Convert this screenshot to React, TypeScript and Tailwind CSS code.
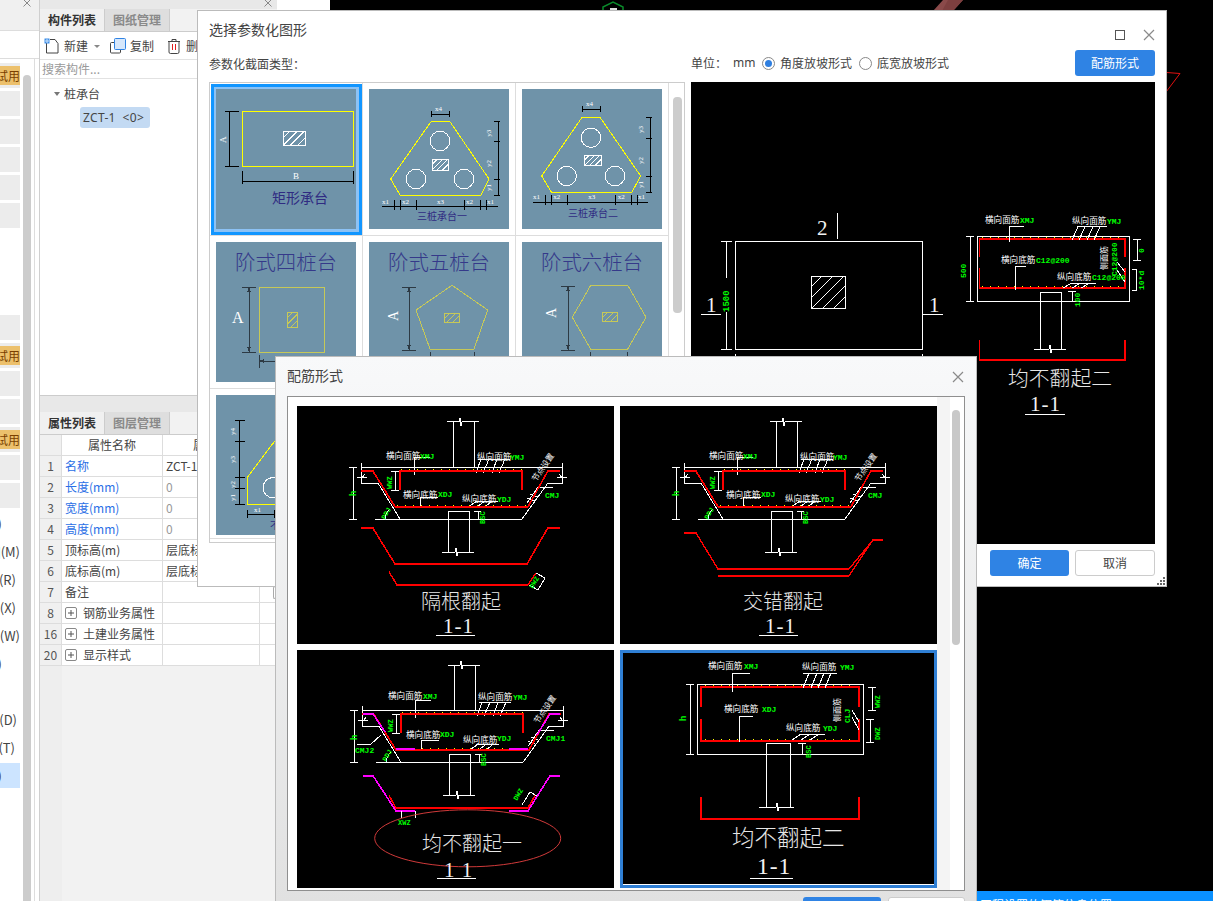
import React from "react";

const CJK = "'Noto Sans CJK SC','Noto Sans',sans-serif";
const SERIF = "'Liberation Serif',serif";
const MONO = "'Liberation Mono',monospace";
const W = "#ffffff";
const R = "#ff0000";
const G = "#00ff00";
const M = "#ff00ff";
const Y = "#ffff00";
const K = "#000000";

function P({ d, c = W, w = 1 }: { d: string; c?: string; w?: number }) {
  return <path d={d} fill="none" stroke={c} strokeWidth={w} />;
}

function T({ x, y, s = 8.6, c = W, r, f = CJK, children, sp, wt }: { x: number; y: number; s?: number; c?: string; r?: number; f?: string; children: React.ReactNode; sp?: number; wt?: number }) {
  return (
    <text x={x} y={y} fontSize={s} fill={c} fontFamily={f} fontWeight={wt} letterSpacing={sp} transform={r !== undefined ? `rotate(${r} ${x} ${y})` : undefined}>
      {children}
    </text>
  );
}

/* green CAD annotation */
function N({ x, y, s = 8, r, children }: { x: number; y: number; s?: number; r?: number; children: React.ReactNode }) {
  return <T x={x} y={y} s={s} c={G} r={r} f={MONO} wt={700}>{children}</T>;
}

function Hatch({ x, y, w, h, c = W, n = 5 }: { x: number; y: number; w: number; h: number; c?: string; n?: number }) {
  const step = (w + h) / n;
  let d = "";
  for (let i = 1; i < n; i++) {
    const a = step * i;
    d += `M${a - h} ${h}L${a} 0 `;
  }
  return (
    <g>
      <svg x={x} y={y} width={w} height={h}>
        <path d={d} stroke={c} fill="none" strokeWidth={1} />
      </svg>
      <rect x={x} y={y} width={w} height={h} fill="none" stroke={c} strokeWidth={1} />
    </g>
  );
}

function Brk({ x, y }: { x: number; y: number }) {
  return <path d={`M${x - 3} ${y}H${x}L${x + 1} ${y - 4}L${x + 2} ${y + 4}L${x + 3} ${y}H${x + 6}`} fill="none" stroke={W} strokeWidth={1} />;
}

/* ------------ bar-layout drawings for the reinforcement gallery ------------ */

function TrapBody() {
  return (
    <g>
      <P d="M150 15.7H160M166 15.7H182M156.3 15.7V61M177 15.7V61" />
      <Brk x={162} y={15.7} />
      <P d="M64 61.3H265M64 57V77H81L103 113M78 113H225L251 77H265V57" />
      <P d="M151 105V146M172 105V146M151 105H172M145 146H156M162 146H177" />
      <Brk x={158} y={146} />
      <P d="M56 61V113M52 61H60M52 113H60" />
      <P d="M60 71H70M68 68L64 73M260 71H270M262 68L266 73" />
      <P d="M88 113A14 14 0 0 1 93 103" />
      <P d="M98 65V84M94 65H102M94 84H102" />
      <P d="M181 105V113M177 105H184" />
      <P d="M256 81H241L230 97M230 92L238 95M233 88L241 91" />
      <P d="M181 53H213M179 67L184 53M186 67L192 53M195 67L200 53M202 67L208 53" />
      <P d="M178 95H201M171 101L180 95M180 101L188 95M188 101L195 95" />
      <P d="M117 51.3H133M117 51.3V69" />
      <P d="M123 91H141M123 91V102" />
      <P d="M103 84V64.7H225V84M64 64.7H75.7L98 100.7H231L251 64.7H263" c={R} w={1.6} />
      <path d="M104 63.4H225M100 99.4H229" stroke={Y} strokeWidth={1} strokeDasharray="1 7" fill="none" />
    </g>
  );
}

function TrapLabels() {
  return (
    <g>
      <T x={89} y={53}>横向面筋</T>
      <N x={123} y={53}>XMJ</N>
      <T x={180} y={54}>纵向面筋</T>
      <N x={213} y={54}>YMJ</N>
      <T x={106} y={92}>横向底筋</T>
      <N x={141} y={91}>XDJ</N>
      <T x={165} y={96}>纵向底筋</T>
      <N x={200} y={96}>YDJ</N>
      <N x={248} y={92}>CMJ</N>
      <N x={95} y={83} r={-90} s={7}>WWZ</N>
      <N x={88} y={114} r={-60} s={7}>PDJ</N>
      <N x={188} y={118} r={-90} s={7}>BSC</N>
      <N x={59} y={90} r={-90} s={9}>h</N>
      <T x={239} y={76} r={-55} s={8}>节点设置</T>
    </g>
  );
}

function Caption({ x, y, title, s = 20, nx, ny, ux1, ux2, uy, one = "1-1" }: { x: number; y: number; title: string; s?: number; nx: number; ny: number; ux1: number; ux2: number; uy: number; one?: string }) {
  return (
    <g>
      <T x={x} y={y} s={s} c="#e6e6e6" wt={300}>{title}</T>
      <T x={nx} y={ny} s={s + 1} c="#f2f2f2" f={SERIF} sp={1}>{one}</T>
      <P d={`M${ux1} ${uy}H${ux2}`} />
    </g>
  );
}

function Bar1() {
  return (
    <svg width="317" height="238" viewBox="0 0 317 238" shapeRendering="crispEdges" className="block bg-black">
      <TrapBody />
      <TrapLabels />
      <P d="M64 121.7H75.7L98 158H230L251 121.7H263" c={R} w={1.6} />
      <P d="M92 165.7L100 179H231L239 167" c={R} w={1.4} />
      <P d="M239 167L248 172L241 184L232 179" />
      <N x={236} y={183} r={-60} s={7}>DWZ</N>
      <Caption x={124} y={203} title="隔根翻起" nx={146} ny={227} ux1={139} ux2={178} uy={229} />
    </svg>
  );
}

function Bar2() {
  return (
    <svg width="317" height="238" viewBox="0 0 317 238" shapeRendering="crispEdges" className="block bg-black">
      <TrapBody />
      <TrapLabels />
      <P d="M64 127H76L98 163H229L253 134H263" c={R} w={1.4} />
      <P d="M98 170H229L253 134" c={R} w={1.4} />
      <Caption x={123} y={203} title="交错翻起" nx={145} ny={227} ux1={139} ux2={178} uy={229} />
    </svg>
  );
}

function Bar3() {
  return (
    <svg width="317" height="238" viewBox="0 0 317 238" shapeRendering="crispEdges" className="block bg-black">
      <g transform="translate(1 -0.7)">
        <TrapBody />
      </g>
      <P d="M66 63.7H76L88 82M99 99H118M212 99H231M240 85L253 63.7H263" c={M} w={1.6} />
      <P d="M66 125.7H76L99 161H118M212 161H231L253 125.7H263" c={M} w={1.6} />
      <P d="M92 145.7L99 158H231L238 145.7" c={R} w={1.6} />
      <P d="M60 94H74L84 85M104 161V168M118 161V168" />
      <P d="M225 155L233 142L240 146" />
      <T x={91} y={49}>横向面筋</T>
      <N x={126} y={49}>XMJ</N>
      <T x={181} y={50}>纵向面筋</T>
      <N x={216} y={50}>YMJ</N>
      <T x={109} y={88}>横向底筋</T>
      <N x={143} y={87}>XDJ</N>
      <T x={166} y={93}>纵向底筋</T>
      <N x={200} y={91}>YDJ</N>
      <N x={249} y={91}>CMJ1</N>
      <N x={58} y={103}>CMJ2</N>
      <N x={96} y={82} r={-90} s={7}>WWZ</N>
      <N x={89} y={112} r={-60} s={7}>PDJ</N>
      <N x={189} y={116} r={-90} s={7}>BSC</N>
      <N x={60} y={90} r={-90} s={9}>h</N>
      <N x={220} y={151} r={-60} s={7}>DWZ</N>
      <N x={101} y={175} s={7}>XWZ</N>
      <T x={241} y={74} r={-55} s={8}>节点设置</T>
      <g style={{ shapeRendering: "auto" }}>
        <ellipse cx={170.7} cy={188.3} rx={93} ry={28.5} fill="none" stroke="#d03a3a" strokeWidth={1} />
      </g>
      <Caption x={125} y={201} title="均不翻起一" nx={147} ny={227} ux1={140} ux2={179} uy={228} one="1 1" />
    </svg>
  );
}

function Bar4() {
  return (
    <svg width="311" height="231" viewBox="3 3 311 231" shapeRendering="crispEdges" className="block bg-black">
      <rect x={77.3} y={34} width={166.4} height={70} fill="none" stroke={W} />
      <P d="M81 57V36.7H239V57M81 69V90.7H239V69" c={R} w={1.6} />
      <path d="M85 35.4H236M85 89.4H236" stroke={Y} strokeWidth={1} strokeDasharray="1 7" fill="none" />
      <P d="M146 93V157M170 93V157M146 93H170M139 157H154M160 157H174" />
      <Brk x={156} y={157} />
      <P d="M81 147V169H239V147" c={R} w={1.6} />
      <P d="M70 34V104M66 34H74M66 104H74" />
      <P d="M112 23H130M112 23V42" />
      <P d="M119 66H133M119 66V92" />
      <P d="M183 23H217M183 38L189 23M191 38L197 23M198 38L204 23M205 38L211 23" />
      <P d="M180 84H205M172 90L181 84M181 90L190 84M190 90L199 84" />
      <P d="M252 37V60M248 37H256M248 60H256M250 69V92M246 69H254M246 92H254" />
      <P d="M182 93V104M178 93H186" />
      <P d="M232 60L239 72M232 67L239 80" />
      <T x={88} y={19}>横向面筋</T>
      <N x={124} y={19}>XMJ</N>
      <T x={182} y={20}>纵向面筋</T>
      <N x={220} y={20}>YMJ</N>
      <T x={104} y={62}>横向底筋</T>
      <N x={142} y={62}>XDJ</N>
      <T x={166} y={81}>纵向底筋</T>
      <N x={203} y={81}>YDJ</N>
      <T x={220} y={72} r={-90} s={8}>侧面筋</T>
      <N x={230} y={73} r={-90}>CLJ</N>
      <N x={260} y={58} r={-90} s={7}>WWZ</N>
      <N x={260} y={90} r={-90} s={7}>DWZ</N>
      <N x={191} y={108} r={-90} s={7}>BSC</N>
      <N x={66} y={71} r={-90} s={9}>h</N>
      <Caption x={112} y={196} title="均不翻起二" s={22.5} nx={137} ny={224} ux1={130} ux2={173} uy={228} />
    </svg>
  );
}

/* ------------ parametric thumbnails ------------ */

function Thumb({ children }: { children: React.ReactNode }) {
  return (
    <svg width="140" height="140" viewBox="0 0 140 140" shapeRendering="crispEdges" className="block bg-[#6f93a9]">
      {children}
    </svg>
  );
}

const NAVY = "#2f2b82";
const DIM = "#2d3a44";
const OLIVE = "#c6c858";

function Rect1() {
  return (
    <Thumb>
      <rect x={26} y={22} width={111} height={55} fill="none" stroke={Y} />
      <P d="M13 22V77M9 22H23M9 77H23M26 92H137M26 82V95M137 82V95" c={K} />
      <Hatch x={67} y={42} w={22} h={14} />
      <T x={10} y={54} r={-90} s={9} f={SERIF}>A</T>
      <T x={77} y={90} s={9} f={SERIF}>B</T>
      <T x={56} y={114} s={14} c={NAVY}>矩形承台</T>
    </Thumb>
  );
}

function Tri({ top, poly, circles, hatch, right, bottom, by, rx, title, ty, tx, topy }: { top: [number, number]; poly: string; circles: [number, number][]; hatch: [number, number, number, number]; right: number[]; bottom: number[]; by: number; rx: number; title: string; ty: number; tx: number; topy: number }) {
  return (
    <Thumb>
      <path d={poly} fill="none" stroke={Y} />
      {circles.map(([cx, cy], i) => (
        <circle key={i} cx={cx} cy={cy} r={9.7} fill="none" stroke={W} />
      ))}
      <Hatch x={hatch[0]} y={hatch[1]} w={hatch[2]} h={hatch[3]} />
      <P d={`M${top[0]} ${topy}H${top[1]}M${top[0]} ${topy - 3}V${topy + 3}M${top[1]} ${topy - 3}V${topy + 3}`} c={K} />
      <T x={top[0] + 4} y={topy - 3} s={7} f={SERIF}>x4</T>
      <P d={`M${rx} ${right[0]}V${right[right.length - 1]}` + right.map((y) => `M${rx - 4} ${y}H${rx + 2}`).join("")} c={K} />
      <T x={rx - 7} y={right[1] - 5} s={7} r={-90} f={SERIF}>y3</T>
      <T x={rx - 7} y={right[2] - 12} s={7} r={-90} f={SERIF}>y2</T>
      <T x={rx - 7} y={right[3] - 4} s={7} r={-90} f={SERIF}>y1</T>
      <P d={`M${bottom[0]} ${by}H${bottom[7]}` + bottom.slice(1, 7).map((x) => `M${x} ${by - 7}V${by + 3}`).join("")} c={K} />
      <T x={bottom[0]} y={by - 3} s={7} f={SERIF}>x1</T>
      <T x={bottom[2] + 2} y={by - 3} s={7} f={SERIF}>x2</T>
      <T x={(bottom[3] + bottom[4]) / 2 - 3} y={by - 3} s={7} f={SERIF}>x3</T>
      <T x={bottom[4] + 2} y={by - 3} s={7} f={SERIF}>x2</T>
      <T x={bottom[6] + 1} y={by - 3} s={7} f={SERIF}>x1</T>
      <T x={tx} y={ty} s={10} c={NAVY}>{title}</T>
    </Thumb>
  );
}

function Step({ n, children }: { n: string; children: React.ReactNode }) {
  return (
    <Thumb>
      <T x={19} y={28} s={20.4} c="#35398a" wt={300}>{n}</T>
      {children}
    </Thumb>
  );
}

function Arrow({ x, y1, y2 }: { x: number; y1: number; y2: number }) {
  return (
    <g>
      <P d={`M${x} ${y1}V${y2}M${x - 7} ${y1}H${x + 7}M${x - 7} ${y2}H${x + 7}`} c={DIM} />
      <path d={`M${x} ${y1}l-2 5h4zM${x} ${y2}l-2 -5h4z`} fill={DIM} />
    </g>
  );
}

function Thumb4() {
  return (
    <Step n="阶式四桩台">
      <rect x={43} y={45} width={65} height={65} fill="none" stroke={OLIVE} />
      <Hatch x={71} y={70} w={10} h={15} c={OLIVE} n={4} />
      <Arrow x={33} y1={45} y2={110} />
      <T x={16} y={81} s={16} f={SERIF}>A</T>
      <P d="M43 113V126M43 119H60" c={DIM} />
      <path d="M43 119l5 -2v4z" fill={DIM} />
    </Step>
  );
}

function Thumb5() {
  return (
    <Step n="阶式五桩台">
      <path d="M83 43.3L118.7 68L105 107H61L47 68Z" fill="none" stroke={OLIVE} />
      <Hatch x={75} y={71} w={15} h={9} c={OLIVE} n={4} />
      <Arrow x={40} y1={45} y2={108} />
      <T x={29} y={79} s={14} r={-90} f={SERIF}>A</T>
      <P d="M61 110V116M105 110V116" c={DIM} />
    </Step>
  );
}

function Thumb6() {
  return (
    <Step n="阶式六桩台">
      <path d="M68.7 43.3H105.7L124 75.3L105.7 107H68.7L50.3 75.3Z" fill="none" stroke={OLIVE} />
      <Hatch x={80} y={70} w={15} h={9} c={OLIVE} n={4} />
      <Arrow x={46} y1={44} y2={108} />
      <T x={34} y={76} s={14} r={-90} f={SERIF}>A</T>
      <P d="M68.7 110V116M105.7 110V116" c={DIM} />
    </Step>
  );
}

function Thumb7() {
  return (
    <Thumb>
      <path d="M80 18L31 82.7V109H130" fill="none" stroke={Y} />
      <circle cx={57} cy={92.7} r={10} fill="none" stroke={W} />
      <P d="M23 25V109M19 25H29M19 46H29M19 82.7H29M19 93.3H29M19 109H29" c={K} />
      <P d="M31 115V123M58 115V123M31 119H58" c={K} />
      <T x={38} y={117} s={7} f={SERIF}>x1</T>
      <T x={19} y={40} s={7} r={-90} f={SERIF}>y4</T>
      <T x={19} y={68} s={7} r={-90} f={SERIF}>y3</T>
      <T x={19} y={93} s={7} r={-90} f={SERIF}>y2</T>
      <T x={19} y={106} s={7} r={-90} f={SERIF}>y1</T>
      <T x={54} y={134} s={10} c={NAVY}>不规则承台</T>
    </Thumb>
  );
}

function Thumbs() {
  const cell = "w-[153px] border-r border-b border-[#dddddd]";
  return (
    <div className="grid grid-cols-[153px_153px_153px] grid-rows-[153px_153px_150px]">
      <div className={cell}>
        <div className="ml-[1px] mt-[1px] h-[151px] w-[151px] border-[3px] border-[#1296ff] bg-[#8cc2f5] pl-[2px] pt-[2px]">
          <Rect1 />
        </div>
      </div>
      <div className={`${cell} pl-[6px] pt-[6px]`}>
        <Tri top={[62, 80]} topy={25} poly="M62 32.7H81L120 90L112 106H31L21.7 90Z" circles={[[71, 52], [47, 90], [95, 90]]} hatch={[63, 70, 16, 11]} right={[32.7, 52.7, 90, 106]} rx={129} bottom={[13, 25, 31, 47, 95, 111, 117, 129]} by={117.7} tx={48} ty={131} title="三桩承台一" />
      </div>
      <div className={`${cell} pl-[6px] pt-[6px]`}>
        <Tri top={[60, 78]} topy={20} poly="M60 28.3H78L118.7 87L110 103H29.3L19.7 87Z" circles={[[69, 48.7], [44.7, 87], [93, 87]]} hatch={[62, 66, 17, 10]} right={[28.3, 49, 87, 103]} rx={128} bottom={[11, 23.7, 29.3, 45, 93.7, 109, 115, 126]} by={113.3} tx={46} ty={128} title="三桩承台二" />
      </div>
      <div className={`${cell} pl-[6px] pt-[6px]`}><Thumb4 /></div>
      <div className={`${cell} pl-[6px] pt-[6px]`}><Thumb5 /></div>
      <div className={`${cell} pl-[6px] pt-[6px]`}><Thumb6 /></div>
      <div className={`${cell} pl-[6px] pt-[6px]`}><Thumb7 /></div>
      <div className={cell} />
      <div className={cell} />
    </div>
  );
}

/* ------------ preview of the selected shape ------------ */

function Preview() {
  return (
    <svg width="464" height="462" viewBox="0 0 464 462" shapeRendering="crispEdges" className="block bg-black">
      <T x={126} y={153} s={21} f={SERIF} c="#f2f2f2">2</T>
      <P d="M146 131V157" />
      <rect x={44} y={159.5} width={187} height={108} fill="none" stroke={W} />
      <Hatch x={120} y={194} w={34} h={32} n={6} />
      <P d="M35 159.5V196M35 230V267.5M30 159.5H41M30 267.5H41M44 272V274M231 272V274" />
      <N x={38} y={230} r={-90} s={9}>1500</N>
      <T x={15} y={230} s={21} f={SERIF} c="#f2f2f2">1</T>
      <P d="M10 232H30M231 232H252" />
      <T x={238} y={230} s={21} f={SERIF} c="#f2f2f2">1</T>

      <rect x={286} y={154.5} width={152} height={64.5} fill="none" stroke={W} />
      <P d="M288.5 175V157H434V175M288.5 186V206H434V186" c={R} w={1.6} />
      <path d="M291 155.6H432M291 204.6H432" stroke={Y} strokeWidth={1} strokeDasharray="1 7" fill="none" />
      <P d="M349 210V267M370 210V267M349 210H370M343 267H356M362 267H375" />
      <Brk x={358} y={267} />
      <P d="M288.5 258V278H434V258" c={R} w={1.6} />
      <P d="M279 154.5V219M275 154.5H283M275 219H283" />
      <P d="M318 144H333M318 144V160" />
      <P d="M324 184H335M324 184V208" />
      <P d="M387 144.5H416M381 158L387 144.5M388 158L394 144.5M396 158L402 144.5M403 158L409 144.5" />
      <P d="M380 201H405M372 206L381 201M381 206L390 201M390 206L399 201" />
      <P d="M446 157V178M442 157H450M442 178H450" />
      <P d="M441 187H445V208H441" />
      <P d="M381 209V219M377 209H385" />
      <P d="M426 180L434 190M426 188L434 200" />
      <T x={294} y={141}>横向面筋</T>
      <N x={329} y={141}>XMJ</N>
      <T x={381} y={142}>纵向面筋</T>
      <N x={416} y={142}>YMJ</N>
      <T x={310} y={181}>横向底筋</T>
      <N x={345} y={181}>C12@200</N>
      <T x={366} y={198}>纵向底筋</T>
      <N x={401} y={198}>C12@200</N>
      <T x={416} y={188} r={-90} s={8}>侧面筋</T>
      <N x={426} y={194} r={-90}>C12@200</N>
      <N x={275} y={196} r={-90} s={8}>500</N>
      <N x={453} y={171} r={-90} s={8}>0</N>
      <N x={453} y={208} r={-90} s={8}>10*d</N>
      <N x={389} y={225} r={-90} s={8}>100</N>

      <T x={317} y={304} s={20.8} c="#e6e6e6" wt={300}>均不翻起二</T>
      <T x={339} y={329} s={21} f={SERIF} c="#f2f2f2" sp={1}>1-1</T>
      <P d="M334 332H374" />
    </svg>
  );
}

/* ------------ left-hand panels ------------ */

const stripRows: { k: string }[] = [
  { k: "orange" }, { k: "gray" }, { k: "gray" }, { k: "gray" }, { k: "gray" }, { k: "gray" },
  { k: "blank" }, { k: "blank" }, { k: "blank" },
  { k: "gray" }, { k: "orange" }, { k: "gray" }, { k: "gray" }, { k: "orange" }, { k: "gray" }, { k: "gray" },
];

function SmallX() {
  return (
    <svg width="8" height="8" viewBox="0 0 8 8" className="block">
      <path d="M0.5 0.5L7.5 7.5M7.5 0.5L0.5 7.5" stroke="#888888" fill="none" />
    </svg>
  );
}

function Strip() {
  return (
    <div className="flex h-full w-[40px] shrink-0 flex-col border-r border-[#cfcfcf] bg-white">
      <div className="flex h-[31px] items-start border-b border-[#dddddd] bg-[#f0f0f0] pl-[23px]">
        <div className="-mt-[1px]"><SmallX /></div>
      </div>
      <div className="h-[28px] border-b border-[#dddddd]" />
      <div className="flex min-h-0 flex-1">
        <div className="flex w-[20px] flex-col gap-[3px] pt-[4px]">
          {stripRows.map((r, i) =>
            r.k === "orange" ? (
              <div key={i} className="flex h-[25px] items-center bg-[#ececec]">
                <div className="flex h-[19px] w-full items-center justify-end overflow-hidden bg-[#ecc06c] text-[12px] leading-none text-[#7a3f00]">
                  <span className="whitespace-nowrap">免费试用</span>
                </div>
              </div>
            ) : r.k === "gray" ? (
              <div key={i} className="h-[25px] bg-[#ececec]" />
            ) : (
              <div key={i} className="h-[25px]" />
            ),
          )}
          <StripText t="框)" pr="pr-[18px]" />
          <StripText t="图(M)" pr="pr-0" />
          <StripText t="板(R)" pr="pr-[4px]" />
          <StripText t="梁(X)" pr="pr-[4px]" />
          <StripText t="墙(W)" pr="pr-0" />
          <StripText t="柱)" pr="pr-[18px]" />
          <div className="h-[25px]" />
          <StripText t="础(D)" pr="pr-[3px]" />
          <StripText t="台(T)" pr="pr-[5px]" />
          <StripText t="台)" pr="pr-[18px]" cls="bg-[#cce4ff]" />
        </div>
        <div className="ml-[3px] mt-[16px] w-[8px] rounded-t-[4px] bg-[#cccccc]" />
        <div className="ml-[3px] w-[1px] bg-[#dddddd]" />
      </div>
    </div>
  );
}

function StripText({ t, pr, cls = "" }: { t: string; pr: string; cls?: string }) {
  return (
    <div className={`flex h-[25px] items-center justify-end overflow-hidden text-[13px] text-[#444444] ${pr} ${cls}`}>
      <span className="whitespace-nowrap">{t}</span>
    </div>
  );
}

function Tabs({ a, b }: { a: string; b: string }) {
  return (
    <div className="flex h-[23px] border-b border-[#cccccc] bg-[#f2f2f2]">
      <div className="flex w-[65px] items-center justify-center border-r border-[#cccccc] bg-[#f0f0f0] text-[12px] font-bold text-[#333333]">{a}</div>
      <div className="flex w-[65px] items-center justify-center border-r border-[#cccccc] bg-[#dedede] text-[12px] font-bold text-[#8a8a8a]">{b}</div>
    </div>
  );
}

const propRows: { n: string; name: string; val?: string; blue?: boolean; gray?: boolean; plus?: boolean }[] = [
  { n: "1", name: "名称", val: "ZCT-1", blue: true },
  { n: "2", name: "长度(mm)", val: "0", blue: true, gray: true },
  { n: "3", name: "宽度(mm)", val: "0", blue: true, gray: true },
  { n: "4", name: "高度(mm)", val: "0", blue: true, gray: true },
  { n: "5", name: "顶标高(m)", val: "层底标高" },
  { n: "6", name: "底标高(m)", val: "层底标高" },
  { n: "7", name: "备注" },
  { n: "8", name: "钢筋业务属性", plus: true },
  { n: "16", name: "土建业务属性", plus: true },
  { n: "20", name: "显示样式", plus: true },
];

function PropTable() {
  return (
    <div className="flex min-h-0 flex-1 flex-col bg-[#f0f0f0]">
      <div className="flex h-[21px] border-b border-[#dddddd] bg-white text-[12px] text-[#444444]">
        <div className="w-[22px] border-r border-[#dddddd] bg-[#f0f0f0]" />
        <div className="flex w-[101px] items-center justify-center border-r border-[#dddddd]">属性名称</div>
        <div className="flex w-[97px] items-center justify-center overflow-hidden border-r border-[#dddddd]">属性值</div>
        <div className="flex-1" />
      </div>
      {propRows.map((r) => (
        <div key={r.n} className="flex h-[21px] border-b border-[#dddddd] bg-white text-[12px] text-[#444444]">
          <div className="flex w-[22px] items-center justify-center border-r border-[#dddddd] bg-[#f0f0f0] text-[12px] text-[#555555]">{r.n}</div>
          <div className={`flex w-[101px] items-center gap-[6px] whitespace-nowrap border-r border-[#dddddd] pl-[3px] ${r.blue ? "text-[#2b6fe6]" : ""}`}>
            {r.plus && (
              <span className="flex h-[12px] w-[12px] items-center justify-center rounded-[2px] border border-[#888888]">
                <svg width="8" height="8" viewBox="0 0 8 8"><path d="M4 1V7M1 4H7" stroke="#555" strokeWidth="1" /></svg>
              </span>
            )}
            <span>{r.name}</span>
          </div>
          <div className={`flex w-[97px] items-center overflow-hidden whitespace-nowrap border-r border-[#dddddd] pl-[3px] ${r.gray ? "text-[#999999]" : ""}`}>{r.val}</div>
          <div className="flex flex-1 items-center justify-end">
            {r.n === "7" && <span className="h-[13px] w-[4px] rounded-l-[2px] border border-r-0 border-[#aaaaaa]" />}
          </div>
        </div>
      ))}
      <div className="flex flex-1">
        <div className="w-[22px] bg-[#eeeeee]" />
        <div className="flex-1 bg-[#f2f2f2]" />
      </div>
    </div>
  );
}

function Panel() {
  return (
    <div className="flex h-full w-[237px] shrink-0 flex-col bg-[#e8e8e8]">
      <div className="flex h-[9px] items-start justify-end overflow-hidden pr-[5px]">
        <div className="-mt-[1px]"><SmallX /></div>
      </div>
      <div className="flex h-[387px] flex-col border-b border-[#cccccc] bg-white">
        <Tabs a="构件列表" b="图纸管理" />
        <div className="flex h-[28px] items-center border-b border-[#e2e2e2] pl-[4px] text-[12px] text-[#444444]">
          <svg width="16" height="16" viewBox="0 0 16 16">
            <path d="M2.5 3V15H14V5.5L11 1.5H6" fill="none" stroke="#444" />
            <rect x="0.5" y="0.5" width="5" height="5" fill="#3d8ee8" />
            <path d="M1 3H5M3 1V5" stroke="#cfe4fb" strokeWidth="1" />
          </svg>
          <span className="ml-[4px]">新建</span>
          <span className="ml-[6px] mt-[1px] h-0 w-0 border-x-[3px] border-t-[3px] border-x-transparent border-t-[#888888]" />
          <svg className="ml-[10px]" width="16" height="16" viewBox="0 0 16 16">
            <rect x="0.5" y="4.5" width="10" height="10.5" rx="1" fill="#fff" stroke="#444" />
            <rect x="4.5" y="0.5" width="11" height="11" rx="1" fill="#d6e7fb" stroke="#2f83e4" />
          </svg>
          <span className="ml-[4px]">复制</span>
          <svg className="ml-[13px]" width="14" height="16" viewBox="0 0 14 16">
            <path d="M1 3.5H13M5 3.5V1.5H9V3.5M2 3.5V14A1.5 1.5 0 0 0 3.5 15.5H10.5A1.5 1.5 0 0 0 12 14V3.5" fill="none" stroke="#444" />
            <path d="M5.5 6V12M8.5 6V12" stroke="#e02020" strokeWidth="1" />
          </svg>
          <span className="ml-[5px] whitespace-nowrap">删除</span>
        </div>
        <div className="flex h-[19px] items-center border-b border-[#e2e2e2] pl-[2px] text-[12px] text-[#9a9a9a]">搜索构件...</div>
        <div className="pl-[14px] pt-[5px] text-[12px] text-[#444444]">
          <div className="flex h-[20px] items-center gap-[4px]">
            <span className="h-0 w-0 border-x-[3px] border-t-[4px] border-x-transparent border-t-[#777777]" />
            <span>桩承台</span>
          </div>
          <div className="ml-[26px] mt-[3px] flex h-[21px] w-[70px] items-center whitespace-pre rounded-[3px] bg-[#c3daf3] pl-[3px] font-['Noto_Sans',sans-serif] tracking-[0.3px]">{"ZCT-1  <0>"}</div>
        </div>
      </div>
      <div className="h-[16px]" />
      <Tabs a="属性列表" b="图层管理" />
      <PropTable />
    </div>
  );
}

/* ------------ windows ------------ */

function Radio({ on }: { on?: boolean }) {
  return (
    <span className="flex h-[13px] w-[13px] shrink-0 items-center justify-center rounded-full border border-[#888888] bg-white">
      {on && <span className="h-[7px] w-[7px] rounded-full bg-[#2f7fe0]" />}
    </span>
  );
}

function XIcon() {
  return (
    <svg width="12" height="12" viewBox="0 0 12 12">
      <path d="M1 1L11 11M11 1L1 11" stroke="#8a8a8a" strokeWidth="1.2" fill="none" />
    </svg>
  );
}

function Btn({ w, blue, children }: { w: string; blue?: boolean; children: React.ReactNode }) {
  return (
    <div className={`flex h-[26px] ${w} shrink-0 items-center justify-center rounded-[3px] text-[12px] ${blue ? "bg-[#2f83e4] text-white" : "border border-[#cccccc] bg-white text-[#444444]"}`}>
      {children}
    </div>
  );
}

function ShapeDialog() {
  return (
    <div className="absolute left-[197px] top-[10px] flex h-[577px] w-[970px] flex-col border border-[#bbbbbb] bg-white text-[#444444]">
      <div className="flex h-[38px] shrink-0 items-center justify-between px-[11px]">
        <span className="-mt-[2px] text-[14px]">选择参数化图形</span>
        <div className="mt-[10px] flex items-center gap-[18px]">
          <span className="h-[10px] w-[10px] border border-[#555555]" />
          <XIcon />
        </div>
      </div>
      <div className="flex shrink-0 gap-[6px] px-[11px]">
        <div className="w-[476px]">
          <div className="flex h-[33px] items-center pb-[3px] text-[12px]">参数化截面类型：</div>
          <div className="flex h-[461px] overflow-hidden border border-[#cccccc]">
            <Thumbs />
            <div className="ml-[4px] mt-[14px] h-[216px] w-[9px] rounded-[4px] bg-[#cccccc]" />
          </div>
        </div>
        <div className="w-[464px]">
          <div className="flex h-[33px] items-start text-[12px]">
            <div className="flex h-[27px] flex-1 items-center pt-[1px]">
              <span className="w-[42px]">单位：</span>
              <span className="w-[29px] font-['Noto_Sans',sans-serif]">mm</span>
              <Radio on />
              <span className="ml-[5px]">角度放坡形式</span>
              <span className="ml-[7px]"><Radio /></span>
              <span className="ml-[5px]">底宽放坡形式</span>
            </div>
            <div className="mt-[1px]"><Btn w="w-[80px]" blue>配筋形式</Btn></div>
          </div>
          <Preview />
        </div>
      </div>
      <div className="flex justify-end gap-[6px] px-[11px] pt-[6px]">
        <Btn w="w-[79px]" blue>确定</Btn>
        <Btn w="w-[80px]">取消</Btn>
      </div>
      <svg className="absolute bottom-[1px] right-[1px]" width="9" height="9" viewBox="0 0 9 9">
        <path d="M7 1h2v2H7zM4 4h2v2H4zM7 4h2v2H7zM1 7h2v2H1zM4 7h2v2H4zM7 7h2v2H7z" fill="#666" />
      </svg>
    </div>
  );
}

function BarDialog() {
  return (
    <div className="absolute left-[275px] top-[356px] flex h-[570px] w-[702px] flex-col border border-[#bbbbbb] bg-gradient-to-b from-[#f8f9fa] to-[#e0e0e0] text-[#444444]">
      <div className="flex h-[39px] shrink-0 items-center justify-between pl-[11px] pr-[12px]">
        <span className="-mt-[2px] text-[14px]">配筋形式</span>
        <XIcon />
      </div>
      <div className="mx-[11px] flex h-[495px] shrink-0 border border-[#8f8f8f] bg-white">
        <div className="ml-[9px] mt-[9px] grid h-fit w-[640px] grid-cols-[317px_317px] gap-[6px]">
          <Bar1 />
          <Bar2 />
          <Bar3 />
          <div className="border-[3px] border-[#2f7fd5]"><Bar4 /></div>
        </div>
        <div className="w-[13px] bg-[#f4f4f4]" />
        <div className="w-[14px] px-[2px] pt-[13px]">
          <div className="h-[235px] w-[8px] rounded-[4px] bg-[#c8c8c8]" />
        </div>
      </div>
      <div className="flex justify-end gap-[7px] px-[11px] pt-[6px]">
        <Btn w="w-[78px]" blue>确定</Btn>
        <Btn w="w-[77px]">取消</Btn>
      </div>
    </div>
  );
}

export default function App() {
  return (
    <div className="relative flex h-[901px] w-[1213px] overflow-hidden bg-black font-['Noto_Sans_CJK_SC','Noto_Sans',sans-serif]">
      <Strip />
      <Panel />
      <div className="h-full w-[53px] shrink-0 bg-white" />
      <div className="flex h-full flex-1 flex-col justify-end">
        <div className="h-[10px] overflow-hidden bg-[#0a90ff] pl-[650px] pt-[7px] text-[12px] leading-[14px] text-white">
          <span className="whitespace-nowrap">工程设置的钢筋信息位置</span>
        </div>
      </div>
      <svg className="absolute left-[330px] top-0" width="883" height="120" viewBox="330 0 883 120">
        <path d="M603 10V7L613 2L623 7V10" fill="none" stroke="#0a8a2a" strokeWidth="1.5" />
        <rect x="610" y="8" width="7" height="2" fill="#dddddd" />
        <path d="M943 0H963L953 11H933Z" fill="#8a4a4a" />
        <path d="M948 0H963L953 11H942Z" fill="#7d3f3f" />
        <path d="M1160 72L1180 73.5L1160 100" fill="none" stroke="#e01010" strokeWidth="1" />
      </svg>
      <ShapeDialog />
      <BarDialog />
    </div>
  );
}
